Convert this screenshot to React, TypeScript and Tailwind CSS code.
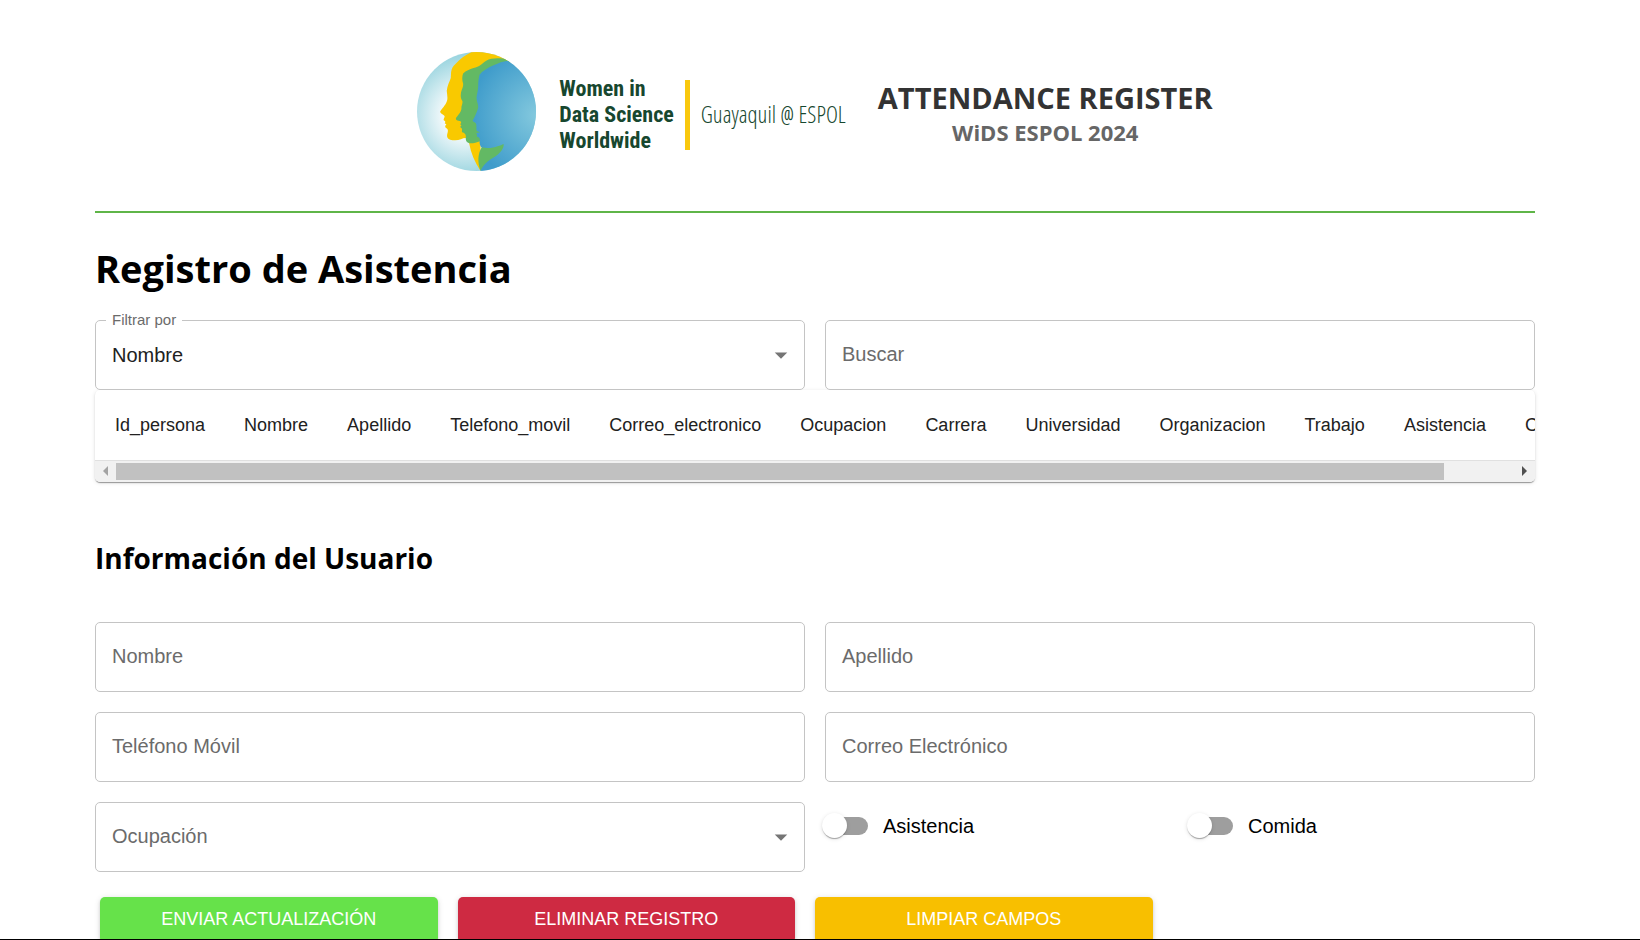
import { useState } from "react";
import type { ReactNode } from "react";

const columns = [
  "Id_persona",
  "Nombre",
  "Apellido",
  "Telefono_movil",
  "Correo_electronico",
  "Ocupacion",
  "Carrera",
  "Universidad",
  "Organizacion",
  "Trabajo",
  "Asistencia",
  "Comida",
];

function FacesMark() {
  return (
    <svg viewBox="51 36 356 356" className="size-[119px] shrink-0" aria-hidden="true">
      <defs>
        <radialGradient id="halo" gradientUnits="userSpaceOnUse" cx="195" cy="225" r="195">
          <stop offset="0" stopColor="#ffffff" />
          <stop offset="0.35" stopColor="#f0f8fa" />
          <stop offset="1" stopColor="#8fd0dc" />
        </radialGradient>
        <radialGradient id="sea" gradientUnits="userSpaceOnUse" cx="410" cy="225" r="200">
          <stop offset="0" stopColor="#84c9de" />
          <stop offset="1" stopColor="#3f9ccb" />
        </radialGradient>
        <clipPath id="disc">
          <circle cx="229" cy="214" r="178" />
        </clipPath>
      </defs>
      <g clipPath="url(#disc)">
        <rect x="51" y="36" width="356" height="356" fill="url(#halo)" />
        <path
          fill="#f9c900"
          d="M153 96C155 84 158 79 166 72C182 54 198 44 218 34L330 34L330 120L241 300L241 392C224 366 212 338 207 309L197 293C186 293 178 301 162 300C150 300 142 296 141 288C140 281 146 273 142 266C137 263 134 261 136 256L139 253L134 249C137 245 136 243 131 240C129 236 137 229 132 226C127 223 121 219 120 215C124 207 137 194 140 184C144 176 141 165 140 152C142 136 148 126 152 114Z"
        />
        <path
          fill="#63b964"
          d="M189 100C198 92 208 88 220 84C238 80 246 70 258 62C275 52 300 54 330 58L330 130L241 302C228 307 218 310 208 309C198 307 196 299 197 290C198 283 194 278 186 276C184 272 187 269 185 265L180 260L184 255L180 252C186 246 183 243 175 242C169 241 166 238 168 233C176 222 184 215 184 203C183 197 188 192 187 183C181 174 181 167 183 156C186 144 190 140 189 130C185 119 186 108 189 100Z"
        />
        <path
          fill="url(#sea)"
          d="M238 104C246 94 262 84 280 76C296 68 308 64 322 62L410 62L410 392L241 392L245 322C239 317 237 308 239 299C240 294 236 291 230 289C230 285 232 282 228 278L239 277C237 273 230 274 229 270C228 262 230 255 227 249C223 244 216 245 218 240C226 226 232 212 234 202C235 192 229 184 229 172C231 158 235 146 234 132C235 118 236 112 238 104Z"
        />
        <path
          fill="#63b964"
          d="M245 321C263 326 280 322 292 318C300 316 305 313 310 311C312 323 300 338 286 348C270 358 254 365 241 391C232 366 232 341 245 321Z"
        />
      </g>
    </svg>
  );
}

function Caret() {
  return (
    <svg
      viewBox="0 0 24 24"
      className="pointer-events-none absolute right-[9px] top-5 size-[30px] fill-[#757575]"
      aria-hidden="true"
    >
      <path d="M7 10l5 5 5-5z" />
    </svg>
  );
}

const boxClass =
  "h-[70px] w-full appearance-none rounded-[5px] border border-[#c4c4c4] bg-white px-4 text-[20px] leading-6 text-[#212121] outline-none focus:border-[#1976d2]";

function TextField({ id, label, type = "text" }: { id: string; label: string; type?: string }) {
  return (
    <div className="relative">
      <input id={id} type={type} placeholder=" " className={"peer " + boxClass} />
      <label
        htmlFor={id}
        className="pointer-events-none absolute left-[17px] top-[22px] text-[20px] leading-6 text-[#6b6b6b] peer-[:not(:placeholder-shown)]:hidden"
      >
        {label}
      </label>
    </div>
  );
}

function Toggle({ label }: { label: string }) {
  const [on, setOn] = useState(false);
  return (
    <label className="flex h-12 cursor-pointer items-center gap-[15px] text-[20px] leading-6 text-black">
      <span className="relative flex h-[18px] w-[43px] items-center">
        <input
          type="checkbox"
          role="switch"
          checked={on}
          onChange={() => setOn(!on)}
          className="peer h-[18px] w-[43px] cursor-pointer appearance-none rounded-full bg-[#9e9e9e] checked:bg-[#90bde8]"
        />
        <span className="pointer-events-none absolute -left-[3px] size-[25px] rounded-full bg-white shadow-[0_2px_1px_-1px_rgba(0,0,0,0.2),0_1px_1px_rgba(0,0,0,0.14),0_1px_4px_rgba(0,0,0,0.12)] peer-checked:left-[22px]" />
      </span>
      {label}
    </label>
  );
}

function ActionButton({ color, children }: { color: string; children: ReactNode }) {
  return (
    <button
      type="button"
      className={
        "h-[46px] rounded-[5px] pb-[2px] text-[18px] leading-8 font-medium text-white uppercase shadow-[0_3px_1px_-2px_rgba(0,0,0,0.2),0_2px_3px_rgba(0,0,0,0.14),0_1px_6px_rgba(0,0,0,0.12)] " +
        color
      }
    >
      {children}
    </button>
  );
}

export default function App() {
  return (
    <div className="h-screen overflow-y-auto border-b border-black bg-white font-['Liberation_Sans',Arial,sans-serif] [scrollbar-width:none]">
      <div className="pr-[105px] pl-[95px]">
        <header className="flex h-[213px] items-center justify-center border-b-2 border-[#5fb548] pt-3">
          <div className="flex items-center pr-8">
            <FacesMark />
            <p className="pt-[6px] pl-[23px] font-['Roboto_Condensed','Open_Sans_Condensed',sans-serif] text-[22px] leading-[26px] font-bold whitespace-nowrap text-[#17472f]">
              Women in
              <br />
              Data Science
              <br />
              Worldwide
            </p>
            <span className="mt-[6px] ml-[11px] h-[70px] w-[5px] bg-[#f9c80e]" />
            <p className="pt-1 pl-[11px] font-['Open_Sans_Condensed_Light','Roboto_Condensed_Light','Roboto_Condensed',sans-serif] text-[23px] leading-[26px] font-light whitespace-nowrap text-[#17472f]">
              Guayaquil @ ESPOL
            </p>
          </div>
          <div className="pt-1 text-center font-['Open_Sans','Noto_Sans',sans-serif] font-bold whitespace-nowrap">
            <p className="text-[29px] leading-9 text-[#333333]">ATTENDANCE REGISTER</p>
            <p className="text-[22px] leading-8 text-[#666666]">WiDS ESPOL 2024</p>
          </div>
        </header>

        <main>
          <h1 className="pt-7 pb-[25px] font-['Open_Sans','Noto_Sans',sans-serif] text-[38px] leading-[54px] font-bold text-black">
            Registro de Asistencia
          </h1>

          <div className="grid grid-cols-2 gap-5">
            <div className="relative">
              <select id="filtro" defaultValue="Nombre" className={boxClass}>
                <option>Nombre</option>
                <option>Apellido</option>
              </select>
              <label
                htmlFor="filtro"
                className="absolute -top-[9px] left-[11px] bg-white px-[6px] text-[15px] leading-[18px] text-[#6b6b6b]"
              >
                Filtrar por
              </label>
              <Caret />
            </div>
            <TextField id="buscar" label="Buscar" />
          </div>

          <section className="overflow-hidden rounded-[5px] bg-white shadow-[0_2px_1px_-1px_rgba(0,0,0,0.2),0_1px_1px_rgba(0,0,0,0.2),0_1px_4px_rgba(0,0,0,0.12)]">
            <div className="overflow-x-auto [scrollbar-width:none]">
              <table className="w-full border-collapse">
                <thead>
                  <tr className="h-[70px] border-b border-[#e0e0e0]">
                    {columns.map((name) => (
                      <th
                        key={name}
                        scope="col"
                        className="pr-[19px] pl-5 text-left text-[18px] leading-[30px] font-normal whitespace-nowrap text-[#212121]"
                      >
                        {name}
                      </th>
                    ))}
                  </tr>
                </thead>
              </table>
            </div>
            <div className="flex h-[21px] items-center bg-[#f1f1f1]">
              <button type="button" aria-label="Desplazar a la izquierda" className="flex w-[21px] justify-center">
                <svg viewBox="0 0 5 10" className="h-[10px] w-[5px] fill-[#a3a3a3]">
                  <path d="M5 0v10L0 5z" />
                </svg>
              </button>
              <div className="flex-1">
                <div className="h-[17px] w-[95%] bg-[#c1c1c1]" />
              </div>
              <button type="button" aria-label="Desplazar a la derecha" className="flex w-[21px] justify-center">
                <svg viewBox="0 0 5 10" className="h-[10px] w-[5px] fill-[#505050]">
                  <path d="M0 0v10l5-5z" />
                </svg>
              </button>
            </div>
          </section>

          <h2 className="pt-14 pb-11 font-['Open_Sans','Noto_Sans',sans-serif] text-[28px] leading-10 font-bold text-black">
            Información del Usuario
          </h2>

          <form>
            <div className="grid grid-cols-2 gap-5">
              <TextField id="nombre" label="Nombre" />
              <TextField id="apellido" label="Apellido" />
              <TextField id="telefono" label="Teléfono Móvil" type="tel" />
              <TextField id="correo" label="Correo Electrónico" type="email" />
              <div className="relative">
                <select id="ocupacion" defaultValue="" className={"peer " + boxClass}>
                  <option value="" />
                  <option>Estudiante</option>
                  <option>Profesional</option>
                </select>
                <label
                  htmlFor="ocupacion"
                  className="pointer-events-none absolute top-[22px] left-[17px] text-[20px] leading-6 text-[#6b6b6b] peer-[:has(option:not([value='']):checked)]:hidden"
                >
                  Ocupación
                </label>
                <Caret />
              </div>
              <div className="grid grid-cols-2 items-start gap-5">
                <Toggle label="Asistencia" />
                <Toggle label="Comida" />
              </div>
            </div>

            <div className="grid grid-cols-4 gap-5 pt-[25px] pr-[25px] pl-[5px]">
              <ActionButton color="bg-[#66e24a]">Enviar actualización</ActionButton>
              <ActionButton color="bg-[#ce2a42]">Eliminar registro</ActionButton>
              <ActionButton color="bg-[#f8bf00]">Limpiar campos</ActionButton>
            </div>
          </form>
        </main>
      </div>
    </div>
  );
}
